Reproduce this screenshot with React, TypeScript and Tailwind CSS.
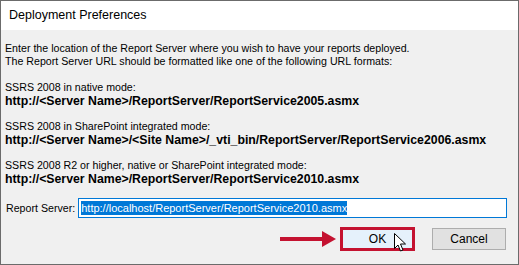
import React from 'react';

const formats = [
  {
    label: 'SSRS 2008 in native mode:',
    url: 'http://<Server Name>/ReportServer/ReportService2005.asmx',
  },
  {
    label: 'SSRS 2008 in SharePoint integrated mode:',
    url: 'http://<Server Name>/<Site Name>/_vti_bin/ReportServer/ReportService2006.asmx',
  },
  {
    label: 'SSRS 2008 R2 or higher, native or SharePoint integrated mode:',
    url: 'http://<Server Name>/ReportServer/ReportService2010.asmx',
  },
];

function Cursor() {
  return (
    <svg width="13" height="19" viewBox="0 0 13 19" className="absolute left-[51px] top-[3px]">
      <path d="M0.5 0.5 L0.5 15.5 L4 12 L6.5 18 L9 17 L6.5 11 L11.5 11 Z" fill="#fff" stroke="#000" strokeWidth="1" strokeLinejoin="miter" />
    </svg>
  );
}

export default function App() {
  return (
    <div className="w-[519px] h-[265px] border border-[#6b6b6b] bg-[#f0f0f0] flex flex-col text-black font-['Liberation_Sans',Arial,sans-serif] overflow-hidden">
      <div className="h-[29px] bg-white flex items-center pl-[8px] text-[12.5px] font-['Segoe_UI','Liberation_Sans',sans-serif]">
        Deployment Preferences
      </div>

      <div className="flex-1 px-[4px] pt-[12px] text-[10.65px] leading-[13px]">
        <p>Enter the location of the Report Server where you wish to have your reports deployed.</p>
        <p>The Report Server URL should be formatted like one of the following URL formats:</p>

        <div className="mt-[13px] flex flex-col gap-[12px]">
          {formats.map((f) => (
            <div key={f.label}>
              <p>{f.label}</p>
              <p className="font-bold text-[12.3px] leading-[14px]">{f.url}</p>
            </div>
          ))}
        </div>

        <div className="mt-[12px] flex items-center gap-[3px]">
          <span className="pl-[1px]">Report Server:</span>
          <div className="w-[429px] h-[20px] border border-[#0078d7] bg-white flex items-center px-[2px]">
            <span className="bg-[#0078d7] text-white text-[11px] leading-[14px]">
              http://localhost/ReportServer/ReportService2010.asmx
            </span>
          </div>
        </div>

        <div className="mt-[9px] flex items-center justify-end pr-[8px]">
          <svg width="56" height="18" viewBox="0 0 56 18" className="mr-[4px]">
            <rect x="0" y="7" width="44" height="4" fill="#c41230" />
            <path d="M42 1 L56 9 L42 17 Z" fill="#c41230" />
          </svg>
          <div className="relative w-[75px] h-[24px] border-[3px] border-[#c41230] bg-[#e5f1fb] flex items-center justify-center text-[12px]">
            OK
            <Cursor />
          </div>
          <div className="ml-[17px] w-[74px] h-[22px] border border-[#adadad] bg-[#e1e1e1] flex items-center justify-center text-[12px]">
            Cancel
          </div>
        </div>
      </div>
    </div>
  );
}
